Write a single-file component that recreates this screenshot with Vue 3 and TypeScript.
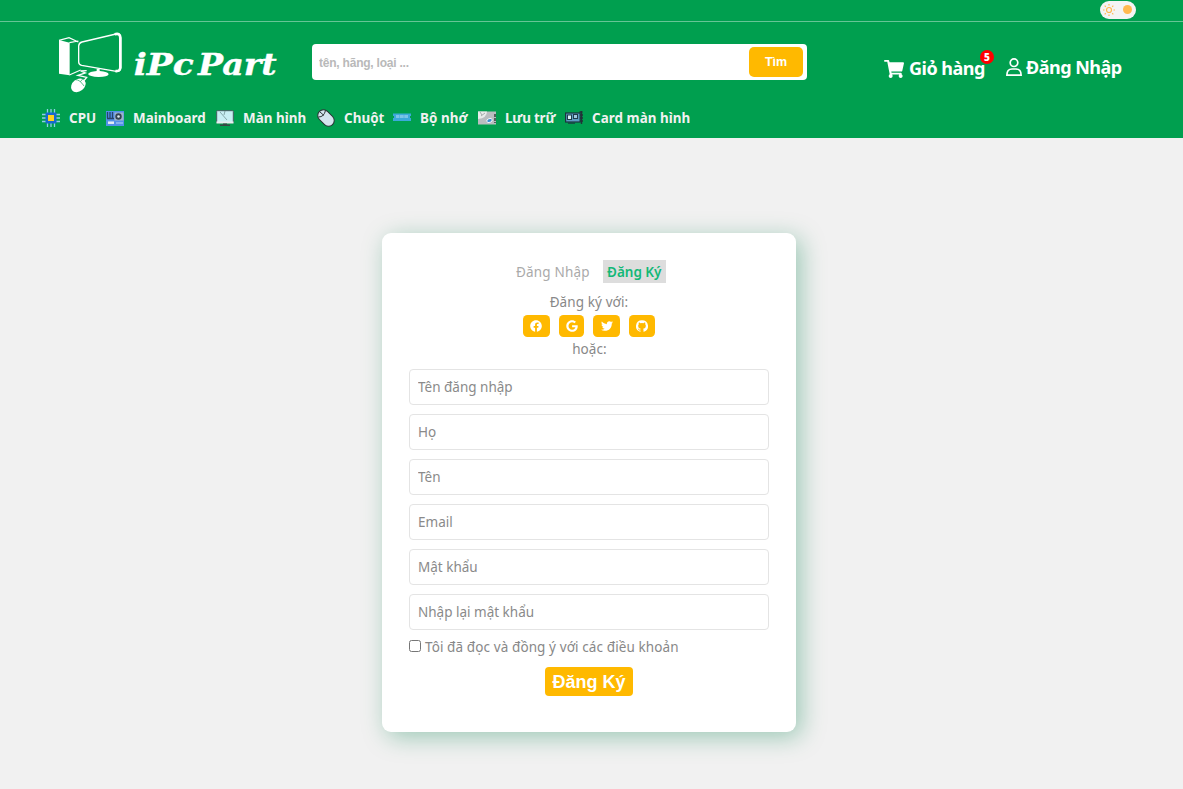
<script setup lang="ts">
import { ref } from 'vue'

interface Category {
  id: string
  label: string
}

const categories: Category[] = [
  { id: 'cpu', label: 'CPU' },
  { id: 'board', label: 'Mainboard' },
  { id: 'screen', label: 'Màn hình' },
  { id: 'mouse', label: 'Chuột' },
  { id: 'ram', label: 'Bộ nhớ' },
  { id: 'disk', label: 'Lưu trữ' },
  { id: 'gpu', label: 'Card màn hình' },
]

const fields = [
  { name: 'username', label: 'Tên đăng nhập', type: 'text' },
  { name: 'lastname', label: 'Họ', type: 'text' },
  { name: 'firstname', label: 'Tên', type: 'text' },
  { name: 'email', label: 'Email', type: 'email' },
  { name: 'password', label: 'Mật khẩu', type: 'password' },
  { name: 'repeat', label: 'Nhập lại mật khẩu', type: 'password' },
]

const socials = [
  { id: 'facebook', path: 'M504 256C504 119 393 8 256 8S8 119 8 256c0 123.78 90.69 226.38 209.25 245V327.69h-63V256h63v-54.64c0-62.15 37-96.48 93.67-96.48 27.14 0 55.52 4.84 55.52 4.84v61h-31.28c-30.8 0-40.41 19.12-40.41 38.73V256h68.78l-11 71.69h-57.78V501C413.31 482.38 504 379.78 504 256z', box: '0 0 512 512' },
  { id: 'google', path: 'M488 261.8C488 403.3 391.1 504 248 504 110.8 504 0 393.2 0 256S110.8 8 248 8c66.8 0 123 24.5 166.3 64.9l-67.5 64.9C258.5 52.6 94.3 116.6 94.3 256c0 86.5 69.1 156.6 153.7 156.6 98.2 0 135-70.4 140.8-106.9H248v-85.3h236.1c2.3 12.7 3.9 24.9 3.9 41.4z', box: '0 0 488 512' },
  { id: 'twitter', path: 'M459.37 151.716c.325 4.548.325 9.097.325 13.645 0 138.72-105.583 298.558-298.558 298.558-59.452 0-114.68-17.219-161.137-47.106 8.447.974 16.568 1.299 25.34 1.299 49.055 0 94.213-16.568 130.274-44.832-46.132-.975-84.792-31.188-98.112-72.772 6.498.974 12.995 1.624 19.818 1.624 9.421 0 18.843-1.3 27.614-3.573-48.081-9.747-84.143-51.98-84.143-102.985v-1.299c13.969 7.797 30.214 12.67 47.431 13.319-28.264-18.843-46.781-51.005-46.781-87.391 0-19.492 5.197-37.36 14.294-52.954 51.655 63.675 129.3 105.258 216.365 109.807-1.624-7.797-2.599-15.918-2.599-24.04 0-57.828 46.782-104.934 104.934-104.934 30.213 0 57.502 12.67 76.67 33.137 23.715-4.548 46.456-13.32 66.599-25.34-7.798 24.366-24.366 44.833-46.132 57.827 21.117-2.273 41.584-8.122 60.426-16.243-14.292 20.791-32.161 39.308-52.628 54.253z', box: '0 0 512 512' },
  { id: 'github', path: 'M8 .2a8 8 0 0 0-2.5 15.6c.4.1.5-.2.5-.4v-1.5c-2.2.5-2.7-.9-2.7-.9-.4-.9-.9-1.2-.9-1.2-.7-.5.1-.5.1-.5.8.1 1.2.8 1.2.8.7 1.2 1.9.9 2.3.7.1-.5.3-.9.5-1.1-1.8-.2-3.6-.9-3.6-4 0-.9.3-1.6.8-2.1-.1-.2-.4-1 .1-2.1 0 0 .7-.2 2.2.8a7.6 7.6 0 0 1 4 0c1.5-1 2.2-.8 2.2-.8.4 1.1.2 1.9.1 2.1.5.6.8 1.3.8 2.1 0 3.1-1.9 3.8-3.7 4 .3.3.6.8.6 1.5v2.2c0 .2.1.5.5.4A8 8 0 0 0 8 .2z', box: '0 0 16 16' },
]

const query = ref('')
const agreed = ref(false)
</script>

<template>
  <div class="page">
    <header class="header">
      <div class="topbar">
        <button class="theme" type="button" aria-label="Theme">
          <svg class="sun" viewBox="0 0 12 12">
            <circle cx="6" cy="6" r="2.5" />
            <path d="M6 0v1.500M6 10.500v1.500M0 6h1.500M10.500 6h1.500M1.700 1.700l1.100 1.100M9.200 9.200l1.100 1.100M1.700 10.300l1.100-1.100M9.200 2.800l1.100-1.100" />
          </svg>
          <span class="knob"></span>
        </button>
      </div>

      <div class="bar">
        <a class="logo">
          <svg width="250" height="82" viewBox="0 0 750 246">
            <path d="M57 54L89 62V160L57 155Z" fill="#fff" />
            <path d="M57 55L87 47L115 60M88 62L115 57M88 159L122 144" fill="none" stroke="#fff" stroke-width="3.500" />
            <path d="M126 60L228 36Q241 33 242 46V138Q241 149 229 148L125 130Q116 128 116 120V72Q117 62 126 60Z" fill="#009f4f" stroke="#fff" stroke-width="4" />
            <path d="M224 37Q241 32 241 48V137Q240 149 226 147" fill="none" stroke="#fff" stroke-width="8" />
            <path d="M170 140H179V147Q205 149 206 157Q203 165 176 165Q148 164 144 156Q148 149 170 147Z" fill="#fff" />
            <path d="M140 146L122 147L136 153L114 160L140 166L132 176" fill="none" stroke="#fff" stroke-width="4" />
            <ellipse cx="115" cy="190" rx="24" ry="18" transform="rotate(-38 115 190)" fill="#fff" />
            <path d="M106 173Q120 173 132 192M121 179L129 170" fill="none" stroke="#009f4f" stroke-width="2" />
            <text class="brand" x="281" y="159" textLength="180" lengthAdjust="spacingAndGlyphs">iPc</text>
            <text class="brand" x="474" y="159" textLength="236" lengthAdjust="spacingAndGlyphs">Part</text>
          </svg>
        </a>

        <form class="search" @submit.prevent>
          <input v-model="query" type="text" placeholder="tên, hãng, loại ..." />
          <button type="submit">Tìm</button>
        </form>

        <a class="action cart">
          <svg viewBox="0 0 576 512" width="20" height="18">
            <path fill="#fff" d="M528.12 301.319l47.273-208C578.806 78.301 567.391 64 551.99 64H159.208l-9.166-44.81C147.758 8.021 137.93 0 126.529 0H24C10.745 0 0 10.745 0 24v0c0 13.255 10.745 24 24 24h69.883l70.248 359.435C147.325 417.1 136 435.222 136 456c0 30.928 25.072 56 56 56s56-25.072 56-56c0-15.674-6.447-29.835-16.824-40h209.647C430.447 426.165 424 440.326 424 456c0 30.928 25.072 56 56 56s56-25.072 56-56c0-22.172-12.888-41.332-31.579-50.405l5.517-10c3.413-15.018-8.002-29.319-23.403-29.319H218.117l-6.545-35h293.145c11.206 0 20.92-7.754 23.403-29.957z" />
          </svg>
          <span>Giỏ hàng</span>
          <b class="badge">5</b>
        </a>
        <a class="action login">
          <svg viewBox="0 0 16 18" width="16" height="18">
            <circle cx="8" cy="4.700" r="3.800" />
            <path d="M.9 17.100Q.9 11 6 11h4q5.100 0 5.100 6.100Z" />
          </svg>
          <span>Đăng Nhập</span>
        </a>
      </div>

      <nav class="nav">
        <a v-for="c in categories" :key="c.id" :class="['cat', c.id]">
          <svg width="18" height="18" viewBox="0 0 18 18">
            <g v-if="c.id === 'cpu'">
              <path d="M5.500 0v18M9 0v18M12.500 0v18M0 5.500h18M0 9h18M0 12.500h18" stroke="#8cd0e5" stroke-width="1.300" />
              <rect x="3.500" y="3.500" width="11" height="11" rx="1" fill="#1668cf" />
              <rect x="6" y="6" width="6" height="6" fill="#ffd21f" />
            </g>
            <g v-else-if="c.id === 'board'">
              <rect y="2" width="18" height="15" fill="#5290e9" />
              <path d="M1.500 3v6M4 3v6M6.500 3v6M1 9.500h7" stroke="#294566" stroke-width="1.300" />
              <rect x="8.500" y="3.500" width="9" height="8" fill="#9fb4cc" />
              <circle cx="12.500" cy="7.500" r="3.200" fill="#344451" />
              <circle cx="12.500" cy="7.500" r="1.300" fill="#dceaf0" />
              <path d="M2 13.700h6" stroke="#e3ecf5" stroke-width="2.500" />
              <path d="M10 14h7" stroke="#86b2ef" stroke-width="2" />
            </g>
            <g v-else-if="c.id === 'screen'">
              <rect x=".7" y="1.700" width="16.600" height="12" rx=".6" fill="#c8eff3" stroke="#485b60" stroke-width="1" />
              <path d="M4 3l7 8M9 2l-1 4" stroke="#688" stroke-width=".7" />
              <path d="M.5 13.500h17" stroke="#e9eeee" stroke-width="2" />
              <path d="M7 14.500h4v1h3v1.500H4v-1.500h3Z" fill="#384744" />
            </g>
            <g v-else-if="c.id === 'mouse'">
              <rect x="3.300" y="-.3" width="11.400" height="18.600" rx="5.700" transform="rotate(-45 9 9)" fill="#d4e5ee" stroke="#292f32" />
              <path d="M1.500 8Q7 8 8.500 1.500M3 3l4 3.500" fill="none" stroke="#303638" stroke-width="1" />
            </g>
            <g v-else-if="c.id === 'ram'">
              <path d="M0 4.500h18v2.500h-1v2h1v3H0V9h1V7H0Z" fill="#3ca9db" />
              <path d="M3 6h12v3H3z" fill="#7ac4e8" />
              <path d="M6.500 6v3M11 6v3" stroke="#5ab4e0" />
            </g>
            <g v-else-if="c.id === 'disk'">
              <rect y="2.500" width="18" height="13" fill="#b9bdc0" />
              <path d="M0 2.500h9Q9 9 0 10Z" fill="#e9eceb" />
              <path d="M2 3l2 3M7 4L3 7" stroke="#a4abad" />
              <path d="M17 5v9" stroke="#54605d" stroke-width="2" stroke-dasharray="3 1" />
              <ellipse cx="11.500" cy="11.500" rx="2.800" ry="1.900" transform="rotate(-20 11.500 11.500)" fill="#3d8ed0" stroke="#fff" stroke-width=".8" />
            </g>
            <g v-else>
              <rect x=".6" y="4" width="14.500" height="9" fill="#5c9cc2" stroke="#1c3540" stroke-width="1.200" />
              <path d="M16.500 2v13M14.500 3h3M15 6h3M15 9h3M15 12h3" stroke="#223238" stroke-width="1.400" />
              <rect x="2.500" y="6" width="4" height="4.500" fill="#d6f3f5" stroke="#203c4b" />
              <rect x="8.500" y="5.500" width="4" height="4" fill="#9fc9e0" stroke="#203c4b" />
              <path d="M3 14.200h7" stroke="#1c3540" />
            </g>
          </svg>
          <span>{{ c.label }}</span>
        </a>
      </nav>
    </header>

    <main class="card">
      <div class="tabs">
        <a class="tab">Đăng Nhập</a>
        <a class="tab active">Đăng Ký</a>
      </div>
      <p class="with">Đăng ký với:</p>
      <div class="socials">
        <button v-for="s in socials" :key="s.id" type="button" :class="s.id" :aria-label="s.id">
          <svg :viewBox="s.box"><path :d="s.path" /></svg>
        </button>
      </div>
      <p class="or">hoặc:</p>
      <form class="form" @submit.prevent>
        <input v-for="f in fields" :key="f.name" :class="['field', f.name]" :type="f.type" :placeholder="f.label" />
        <label class="terms">
          <input v-model="agreed" type="checkbox" />
          <span>Tôi đã đọc và đồng ý với các điều khoản</span>
        </label>
        <button class="submit" type="submit">Đăng Ký</button>
      </form>
    </main>
  </div>
</template>

<style>
body {
  background: #f1f1f1;
}
</style>

<style scoped>
.page,
.page * {
  box-sizing: border-box;
}
.page {
  height: 789px;
  overflow: hidden;
  background: #f1f1f1;
  font-family: "Noto Sans", "Open Sans", sans-serif;
}
.header {
  height: 138px;
  background: #009f4f;
  color: #fff;
}
.topbar {
  height: 22px;
  border-bottom: 1px solid #66c595;
  display: flex;
  justify-content: flex-end;
  padding: 1px 47px 0 0;
}
.theme {
  width: 36px;
  height: 18px;
  border: 0;
  border-radius: 9px;
  background: #f4f4f4;
  padding: 0 4px 1px 3px;
  display: flex;
  align-items: center;
  justify-content: space-between;
}
.sun {
  width: 12px;
  height: 12px;
  fill: none;
  stroke: #ffb94f;
  stroke-width: 1.2;
}
.knob {
  width: 9px;
  height: 9px;
  border-radius: 50%;
  background: #ffb94f;
}
.bar {
  height: 80px;
  display: flex;
  align-items: flex-start;
  padding-left: 40px;
}
.logo {
  width: 272px;
  height: 80px;
}
.logo svg {
  display: block;
}
.brand {
  font: italic bold 88px "DejaVu Serif", serif;
  fill: #fff;
  stroke: #fff;
  stroke-width: 1px;
}
.search {
  width: 495px;
  height: 36px;
  margin-top: 22px;
  padding: 3px 4px 3px 7px;
  background: #fff;
  border-radius: 4px;
  display: flex;
}
.search input {
  flex: 1;
  border: 0;
  padding: 1px 0 0;
  outline: 0;
  background: none;
  font: bold 12px "Liberation Sans", sans-serif;
  letter-spacing: -0.22px;
}
.search input::placeholder {
  color: #b9b9b9;
}
.search button {
  width: 54px;
  border: 0;
  padding: 0;
  border-radius: 5px;
  background: #ffb900;
  color: #fff;
  font: bold 12.5px "Liberation Sans", sans-serif;
}
.action {
  display: flex;
  align-items: center;
  position: relative;
  height: 26px;
  font-size: 18px;
  font-weight: 700;
  letter-spacing: -0.5px;
  white-space: nowrap;
}
.cart {
  margin: 33px 0 0 77px;
  width: 122px;
  gap: 5px;
}
.cart svg {
  margin-top: 1px;
}
.badge {
  position: absolute;
  left: 96px;
  top: -5px;
  width: 14px;
  height: 14px;
  border-radius: 50%;
  background: #f00;
  font-size: 10px;
  line-height: 15px;
  letter-spacing: 0;
  text-align: center;
}
.login {
  margin-top: 32px;
  gap: 4px;
}
.login svg {
  fill: none;
  stroke: #fff;
  stroke-width: 1.7;
}
.nav {
  display: grid;
  grid-template-columns: 64px 110px 101px 76px 85px 87px 140px;
  padding: 5px 0 0 42px;
}
.cat {
  display: flex;
  align-items: center;
  height: 22px;
  gap: 9px;
  font-size: 13.4px;
  font-weight: 700;
  letter-spacing: 0.05px;
  color: #f1f1f1;
  white-space: nowrap;
}
.disk {
  letter-spacing: -0.2px;
}
.card {
  width: 414px;
  height: 499px;
  margin: 95px 0 0 382px;
  padding: 27px;
  border-radius: 9px;
  background: #fff;
  box-shadow: 5px 5px 25px rgba(0, 128, 75, 0.36);
  color: #888;
  font-size: 13.5px;
  letter-spacing: 0.1px;
  display: flex;
  flex-direction: column;
}
.tabs {
  height: 23px;
  display: flex;
  gap: 6px;
  padding-left: 103px;
}
.tab {
  height: 23px;
  line-height: 24px;
  padding: 0 4px;
  color: #aaa;
  white-space: nowrap;
  width: 85px;
  letter-spacing: 0.2px;
}
.active {
  width: 63px;
  background: #ddd;
  color: #13b877;
  font-weight: 600;
}
.tabs .active {
  letter-spacing: 0;
}
.with {
  margin: 8px 0 0;
  height: 24px;
  line-height: 23px;
  text-align: center;
}
.socials {
  display: flex;
  justify-content: center;
  gap: 9px;
}
.socials button {
  width: 27px;
  height: 22px;
  border: 0;
  padding: 0;
  border-radius: 4.5px;
  background: #ffb900;
  display: flex;
  align-items: center;
  justify-content: center;
}
.socials .facebook {
  padding-right: 1px;
}
.socials .google {
  width: 25px;
}
.socials .github {
  width: 26px;
}
.socials svg {
  width: 12px;
  height: 12px;
  fill: #fff;
}
.or {
  margin: 2px 0 0;
  height: 30px;
  line-height: 21px;
  padding-left: 1px;
  text-align: center;
}
.form {
  display: flex;
  flex-direction: column;
}
.field {
  height: 36px;
  margin: 0 0 9px;
  padding: 0 8px;
  border: 1px solid #e4e4e4;
  border-radius: 4px;
  background: #fff;
  outline: 0;
  font: 13.5px "Noto Sans", sans-serif;
  letter-spacing: 0;
}
.field::placeholder {
  color: #8a8a8a;
}
.terms {
  height: 18px;
  margin-top: -1px;
  display: flex;
  align-items: center;
  gap: 4px;
  white-space: nowrap;
}
.terms input {
  width: 12px;
  height: 12px;
  margin: 0 0 2px;
}
.submit {
  width: 88px;
  height: 29px;
  margin: 11px auto 0;
  border: 0;
  padding: 1px 0 0;
  border-radius: 4px;
  background: #ffb900;
  color: #fff;
  font: bold 18px "Liberation Sans", sans-serif;
}
</style>
